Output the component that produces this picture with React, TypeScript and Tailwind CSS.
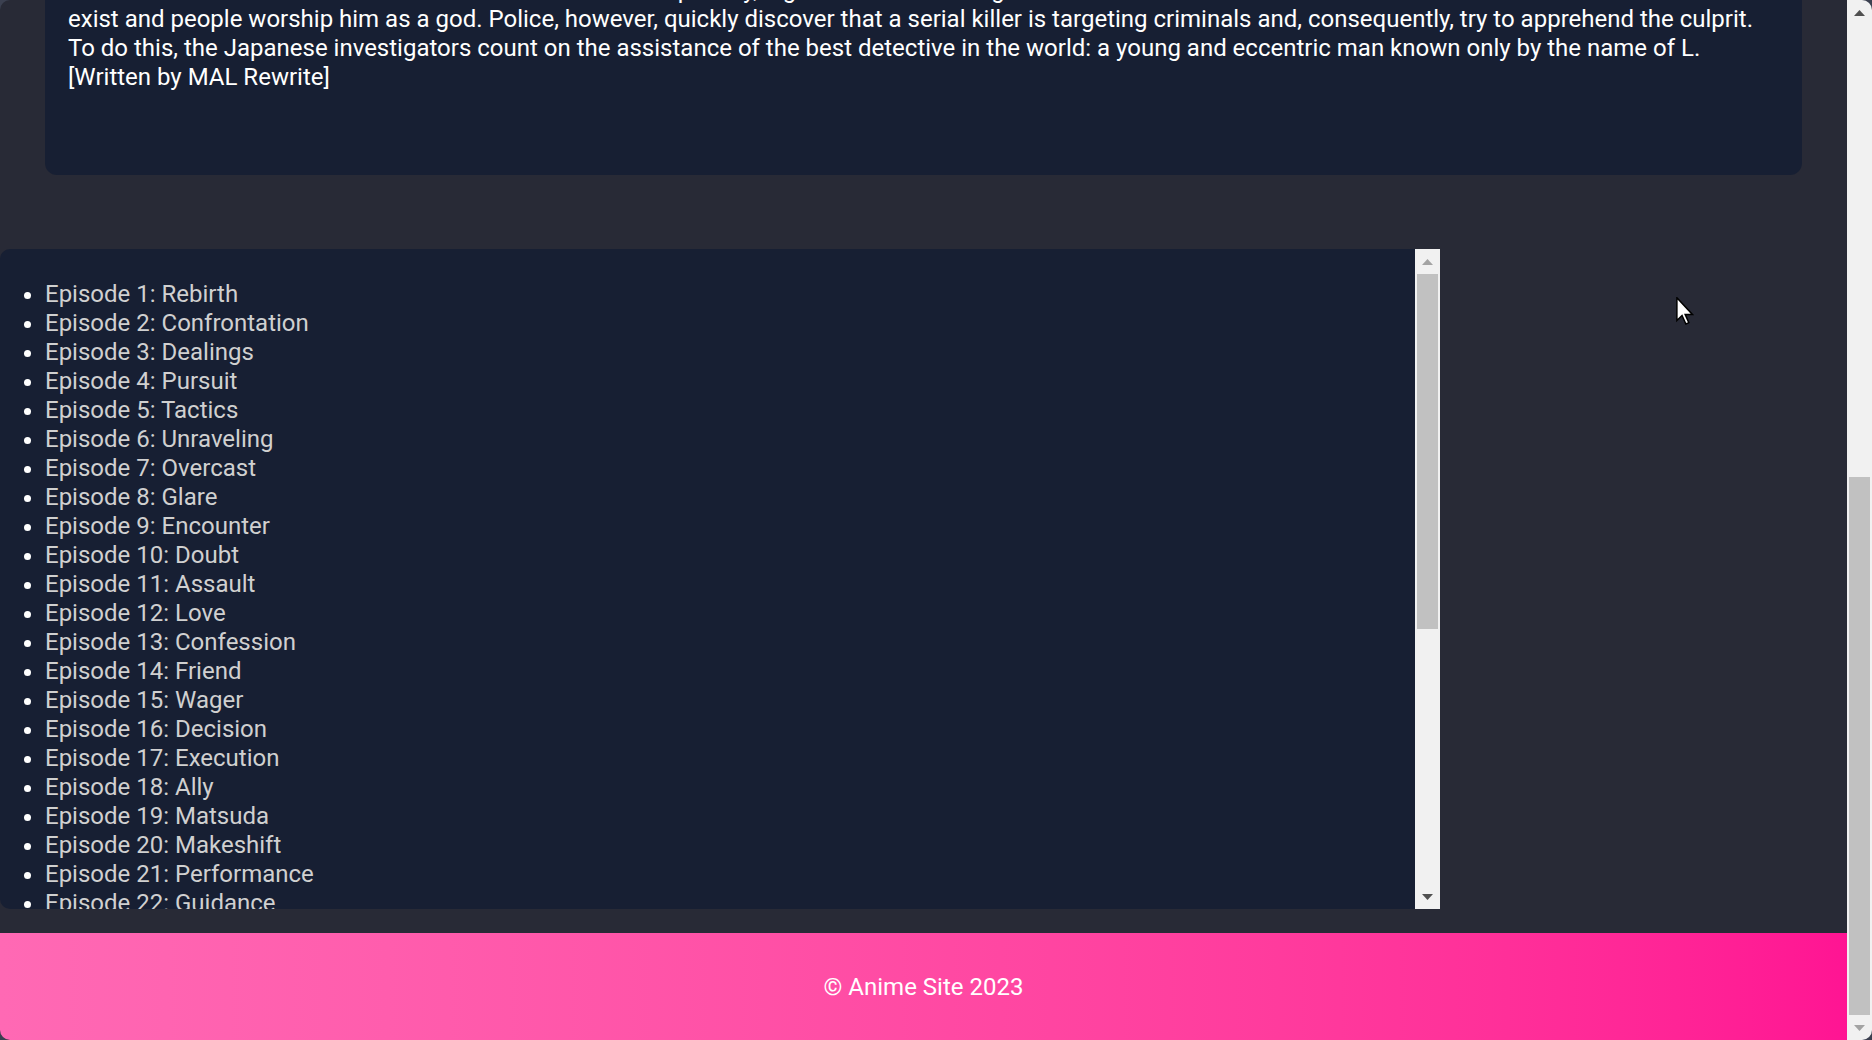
const synopsis =
  "A shinigami, as a god of death, can kill any person—provided they see their victim's face and write their victim's name in a notebook called a Death Note. One day, Ryuk, bored by the shinigami lifestyle and interested in seeing how a human would use a Death Note, drops one into the human realm. High school student and prodigy Light Yagami stumbles upon the Death Note and—since he deplores the state of the world—tests the deadly notebook by writing a criminal's name in it. When the criminal dies immediately following his experiment with the Death Note, Light is greatly surprised and quickly recognizes how devastating the power that has fallen into his hands could be. With this divine capability, Light decides to extinguish all criminals in order to build a new world where crime does not exist and people worship him as a god. Police, however, quickly discover that a serial killer is targeting criminals and, consequently, try to apprehend the culprit. To do this, the Japanese investigators count on the assistance of the best detective in the world: a young and eccentric man known only by the name of L. [Written by MAL Rewrite]";

const episodes = [
  "Rebirth", "Confrontation", "Dealings", "Pursuit", "Tactics", "Unraveling", "Overcast",
  "Glare", "Encounter", "Doubt", "Assault", "Love", "Confession", "Friend", "Wager",
  "Decision", "Execution", "Ally", "Matsuda", "Makeshift", "Performance", "Guidance",
  "Frenzy", "Revival", "Silence", "Renewal", "Abduction", "Impatience", "Father",
  "Justice", "Transfer", "Selection", "Scorn", "Vigilance", "Malice", "1.28", "New World",
];

const Triangle = ({ up, dark }: { up?: boolean; dark?: boolean }) => (
  <svg width="11" height="6" viewBox="0 0 11 6" className={dark ? "fill-[#505050]" : "fill-[#a3a3a3]"}>
    {up ? <path d="M5.5 0 L11 6 L0 6 Z" /> : <path d="M0 0 L11 0 L5.5 6 Z" />}
  </svg>
);

const Cursor = () => (
  <svg width="18" height="28" viewBox="0 0 12 19" className="absolute left-[1676px] top-[297px]">
    <path d="M0.5 0.5 L0.5 16 L4 12.6 L6.6 18.3 L8.6 17.4 L6.1 11.8 L11 11.8 Z" fill="#fff" stroke="#000" strokeWidth="1" />
  </svg>
);

export default function App() {
  return (
    <div className="w-[1872px] h-[1040px] bg-[#3b4050] font-['Roboto',sans-serif]">
      <div className="relative flex h-full overflow-hidden rounded-[10px]">
        <main className="flex w-[1847px] flex-col justify-end overflow-hidden bg-[#282a36]">
          <section className="mx-[45px] shrink-0 rounded-[12px] bg-[#171f33] px-[23px] pt-6 pb-[83px] text-[24px] leading-[29px] text-white">
            <p>{synopsis}</p>
          </section>

          <div className="mt-[74px] flex h-[660px] w-[1440px] shrink-0 overflow-hidden rounded-l-[10px] bg-[#171f33]">
            <ul className="flex-1 list-disc pt-[31px] pl-[45px] text-[24px] leading-[29px] text-[#d0d0d0] marker:text-white">
              {episodes.map((title, i) => (
                <li key={title}>
                  Episode {i + 1}: {title}
                </li>
              ))}
            </ul>
            <div className="flex w-[25px] flex-col bg-[#f1f1f1]">
              <div className="flex h-[25px] items-center justify-center">
                <Triangle up />
              </div>
              <div className="mx-[2px] h-[355px] bg-[#c1c1c1]" />
              <div className="flex-1" />
              <div className="flex h-[25px] items-center justify-center">
                <Triangle dark />
              </div>
            </div>
          </div>

          <footer className="mt-6 flex h-[107px] shrink-0 items-center justify-center bg-linear-to-r from-[#ff69b4] to-[#ff1493] text-[24px] text-white">
            © Anime Site 2023
          </footer>
        </main>

        <div className="flex w-[25px] flex-col bg-[#f1f1f1]">
          <div className="flex h-[25px] items-center justify-center">
            <Triangle up dark />
          </div>
          <div className="flex-1" />
          <div className="mx-[2px] h-[538px] bg-[#c1c1c1]" />
          <div className="flex h-[25px] items-center justify-center">
            <Triangle />
          </div>
        </div>

        <Cursor />
      </div>
    </div>
  );
}
